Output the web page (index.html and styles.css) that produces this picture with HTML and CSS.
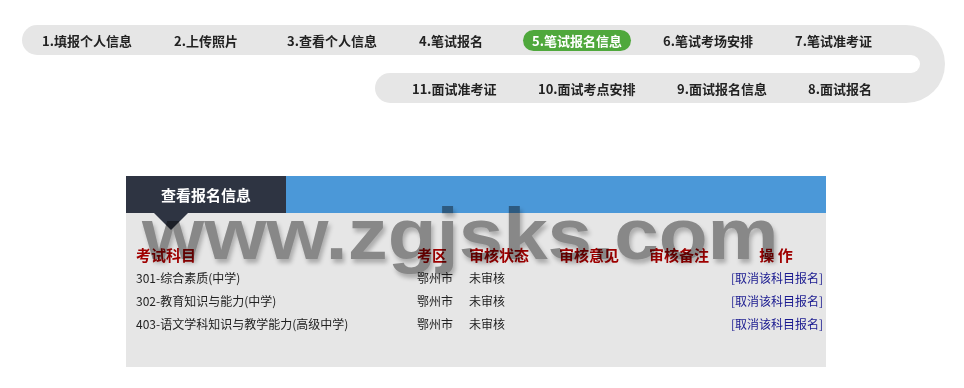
FILE: index.html
```html
<!DOCTYPE html>
<html lang="zh-CN">
<head>
<meta charset="utf-8">
<title>查看报名信息</title>
<link rel="stylesheet" href="styles.css">
</head>
<body>
<div class="steps">
  <div class="rows">
    <div class="row row1">
      <span class="step">1.填报个人信息</span>
      <span class="step">2.上传照片</span>
      <span class="step">3.查看个人信息</span>
      <span class="step">4.笔试报名</span>
      <span class="step active">5.笔试报名信息</span>
      <span class="step">6.笔试考场安排</span>
      <span class="step">7.笔试准考证</span>
    </div>
    <div class="mid"></div>
    <div class="row row2">
      <span class="step">11.面试准考证</span>
      <span class="step">10.面试考点安排</span>
      <span class="step">9.面试报名信息</span>
      <span class="step">8.面试报名</span>
    </div>
  </div>
  <div class="turn"><div class="notch"></div></div>
</div>

<div class="panel">
  <div class="panel-head">
    <div class="tab">查看报名信息</div>
    <div class="bluebar"></div>
  </div>
  <div class="panel-body">
    <table class="grid">
      <colgroup>
        <col class="c1"><col class="c2"><col class="c3"><col class="c4"><col class="c5"><col class="c6">
      </colgroup>
      <thead>
        <tr><th>考试科目</th><th>考区</th><th>审核状态</th><th>审核意见</th><th>审核备注</th><th class="op">操&nbsp;作</th></tr>
      </thead>
      <tbody>
        <tr><td>301-综合素质(中学)</td><td>鄂州市</td><td>未审核</td><td></td><td></td><td class="op"><a href="#">[取消该科目报名]</a></td></tr>
        <tr><td>302-教育知识与能力(中学)</td><td>鄂州市</td><td>未审核</td><td></td><td></td><td class="op"><a href="#">[取消该科目报名]</a></td></tr>
        <tr><td>403-语文学科知识与教学能力(高级中学)</td><td>鄂州市</td><td>未审核</td><td></td><td></td><td class="op"><a href="#">[取消该科目报名]</a></td></tr>
      </tbody>
    </table>
  </div>
  <div class="watermark">www.zgjsks.com</div>
</div>
</body>
</html>
```
FILE: styles.css
```css
html, body {
  margin: 0;
  padding: 0;
  background: #fff;
  font-family: "Noto Sans CJK SC", "Liberation Sans", sans-serif;
}

.steps {
  display: flex;
  width: 923px;
  margin: 25px 0 0 22px;
}

.rows {
  flex: 1;
  display: flex;
  flex-direction: column;
}

.row {
  height: 30px;
  background: #e6e6e6;
  border-radius: 15px 0 0 15px;
  display: grid;
  align-items: center;
}

.row1 {
  padding-left: 11px;
  grid-template-columns: 132px 113px 132px 113px 131px 132px auto;
}

.mid {
  height: 18px;
}

.row2 {
  margin-left: 353px;
  padding-left: 28px;
  grid-template-columns: 126px 139px 131px auto;
}

.step {
  justify-self: start;
  padding: 0 9px;
  height: 21px;
  line-height: 21px;
  font-size: 13px;
  font-weight: bold;
  color: #222;
  white-space: nowrap;
}

.step.active {
  background: #4fa83c;
  color: #fff;
  border-radius: 11px;
}

.turn {
  width: 39px;
  height: 78px;
  background: #e6e6e6;
  border-radius: 0 39px 39px 0;
  display: flex;
  flex-direction: column;
  justify-content: center;
}

.notch {
  width: 14px;
  height: 18px;
  background: #fff;
  border-radius: 0 9px 9px 0;
}

.panel {
  position: relative;
  width: 700px;
  margin: 73px 0 0 126px;
}

.panel-head {
  display: flex;
  height: 37px;
}

.tab {
  position: relative;
  width: 125px;
  padding-left: 35px;
  background: #2e3442;
  color: #fff;
  font-size: 15px;
  font-weight: bold;
  line-height: 37px;
}

.tab::after {
  content: "";
  position: absolute;
  left: 28px;
  top: 37px;
  border-left: 17px solid transparent;
  border-right: 17px solid transparent;
  border-top: 17px solid #2e3442;
}

.bluebar {
  flex: 1;
  background: #4b98d8;
}

.panel-body {
  background: #e6e6e6;
  padding: 29px 3px 32px 10px;
}

.grid {
  width: 687px;
  border-collapse: collapse;
  table-layout: fixed;
}

.c1 { width: 281px; }
.c2 { width: 52px; }
.c3 { width: 90px; }
.c4 { width: 90px; }
.c5 { width: 80px; }
.c6 { width: 94px; }

.grid th {
  height: 24px;
  padding: 0;
  text-align: left;
  font-size: 15px;
  font-weight: bold;
  color: #a00000;
  white-space: nowrap;
}

.grid td {
  height: 23px;
  padding: 0;
  font-size: 12px;
  color: #222;
  white-space: nowrap;
}

.grid .op {
  text-align: right;
}

.grid th.op {
  text-align: center;
}

.grid a {
  color: #1a1a90;
  text-decoration: none;
}

.watermark {
  position: absolute;
  left: 16px;
  top: 22px;
  font-family: "Liberation Sans", Arial, sans-serif;
  font-size: 72px;
  line-height: 72px;
  font-weight: bold;
  color: #979797;
  mix-blend-mode: multiply;
  transform: scaleX(1.11);
  transform-origin: left top;
  text-shadow: 2px 4px 4px rgba(0, 0, 0, 0.25);
  white-space: nowrap;
  pointer-events: none;
}
```
